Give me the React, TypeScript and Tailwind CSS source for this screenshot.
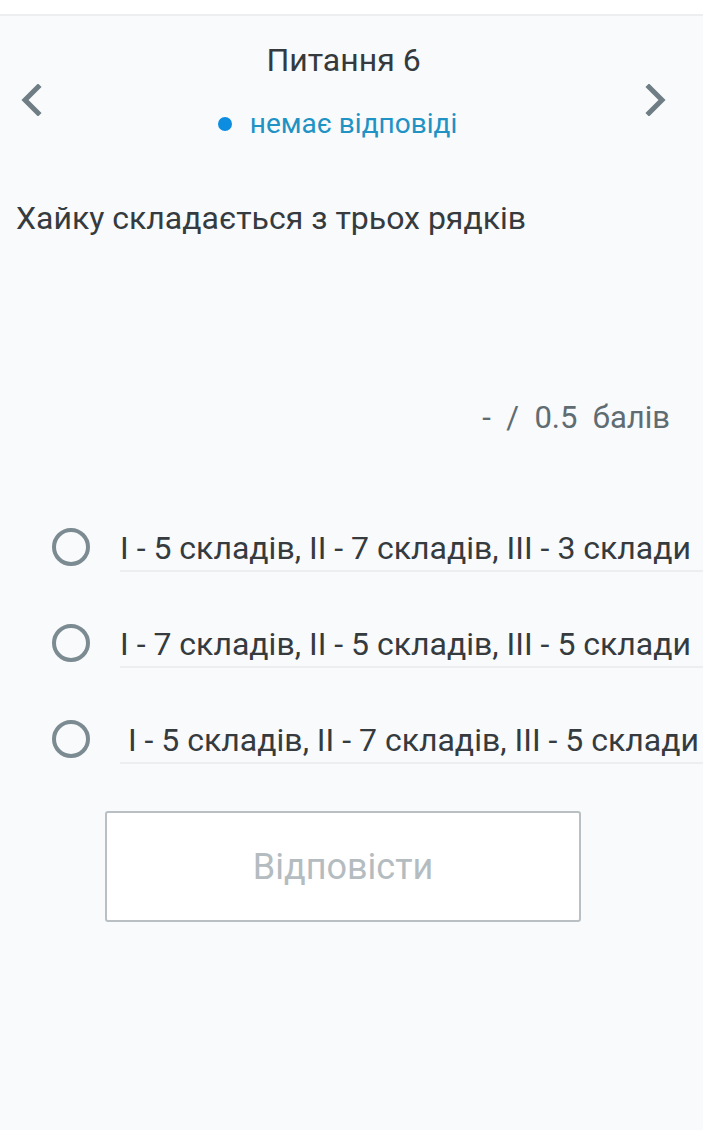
import React from 'react';

const options = [
  'I - 5 складів, II - 7 складів, III - 3 склади',
  'I - 7 складів, II - 5 складів, III - 5 склади',
  ' I - 5 складів, II - 7 складів, III - 5 склади',
];

const Chevron: React.FC<{ dir: 'left' | 'right' }> = ({ dir }) => (
  <svg width="22" height="32" viewBox="0 0 22 32" fill="none">
    <path
      d={dir === 'left' ? 'M18 3 L5 16 L18 29' : 'M4 3 L17 16 L4 29'}
      stroke="#6f7d84"
      strokeWidth="5"
      strokeLinecap="square"
    />
  </svg>
);

export default function App() {
  return (
    <div className="min-h-[1130px] bg-[#f8fafc] font-['Roboto',sans-serif]">
      <div className="h-4 bg-white border-b-2 border-[#eceef0]" />

      {/* Шапка питання */}
      <div className="flex items-start justify-between px-5 pt-[26px]">
        <button className="mt-[42px]"><Chevron dir="left" /></button>
        <div className="flex flex-col items-center">
          <p className="text-[32px] leading-[36px] text-[#343a3d]">Питання 6</p>
          <div className="flex items-center gap-[18px] mt-[31px] mr-[12px]">
            <span className="h-[14px] w-[14px] rounded-full bg-[#0d8de0]" />
            <span className="text-[28px] leading-[30px] text-[#2092c4]">немає відповіді</span>
          </div>
        </div>
        <button className="mt-[42px] mr-[16px]"><Chevron dir="right" /></button>
      </div>

      <p className="px-4 mt-[59px] text-[32px] leading-[40px] text-[#353b3e]">
        Хайку складається з трьох рядків
      </p>

      <p className="mt-[162px] pr-[33px] text-right text-[31px] leading-[36px] text-[#5f6c72] whitespace-pre">
        {'-  /  0.5  балів'}
      </p>

      <div className="mt-[90px] flex flex-col gap-[50px]">
        {options.map((opt, i) => (
          <label key={i} className="flex items-start">
            <span className="ml-[52px] mt-[2px] h-[38px] w-[38px] shrink-0 rounded-full border-[4px] border-[#7b8b91]" />
            <span className="ml-[30px] flex-1 h-[46px] leading-[42px] pt-[1px] border-b-2 border-[#eceef0] text-[32px] text-[#353b3e] whitespace-pre">
              {opt}
            </span>
          </label>
        ))}
      </div>

      <div className="mt-[47px] ml-[105px] w-[476px] h-[111px] rounded-[3px] border-2 border-[#b9bfc2] bg-white flex items-center justify-center">
        <span className="text-[36px] text-[#b4bcc0]">Відповісти</span>
      </div>
    </div>
  );
}
